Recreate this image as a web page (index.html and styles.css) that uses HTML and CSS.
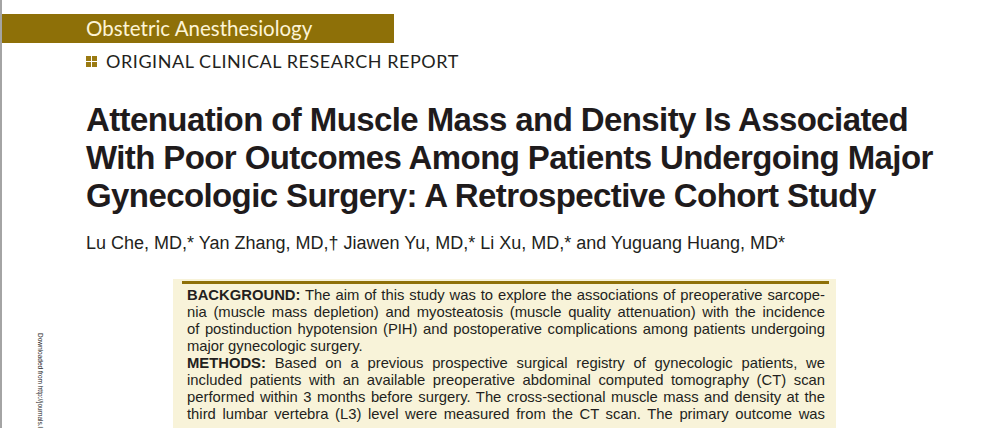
FILE: index.html
```html
<!DOCTYPE html>
<html lang="en">
<head>
<meta charset="utf-8">
<title>Attenuation of Muscle Mass and Density</title>
<link rel="stylesheet" href="styles.css">
</head>
<body>
<div class="page">
  <div class="side-note">Downloaded from http://journals.lww.com/anesthesia-analgesia by BhDMf5ePHKav1zEoum1tQfN4a+kJLhEZgbsIHo4XMi0hCywCX1AWnYQp/IlQrHD3</div>
  <div class="banner">Obstetric Anesthesiology</div>
  <div class="kicker">
    <span class="grid-icon"><i></i><i></i><i></i><i></i></span>
    <span>ORIGINAL CLINICAL RESEARCH REPORT</span>
  </div>
  <h1 class="title">Attenuation of Muscle Mass and Density Is Associated<br>With Poor Outcomes Among Patients Undergoing Major<br>Gynecologic Surgery: A Retrospective Cohort Study</h1>
  <p class="authors">Lu Che, MD,* Yan Zhang, MD,† Jiawen Yu, MD,* Li Xu, MD,* and Yuguang Huang, MD*</p>
  <div class="abstract">
    <div class="rule"></div>
    <div class="abstract-body">
      <span class="ln"><b>BACKGROUND:</b> The aim of this study was to explore the associations of preoperative sarcope-</span>
      <span class="ln">nia (muscle mass depletion) and myosteatosis (muscle quality attenuation) with the incidence</span>
      <span class="ln">of postinduction hypotension (PIH) and postoperative complications among patients undergoing</span>
      <span class="ln last">major gynecologic surgery.</span>
      <span class="ln"><b>METHODS:</b> Based on a previous prospective surgical registry of gynecologic patients, we</span>
      <span class="ln">included patients with an available preoperative abdominal computed tomography (CT) scan</span>
      <span class="ln">performed within 3 months before surgery. The cross-sectional muscle mass and density at the</span>
      <span class="ln">third lumbar vertebra (L3) level were measured from the CT scan. The primary outcome was</span>
    </div>
  </div>
</div>
</body>
</html>
```

FILE: styles.css
```css
html, body {
  margin: 0;
  padding: 0;
  background: #ffffff;
  overflow: hidden;
}

body {
  width: 1006px;
  height: 428px;
}

.page {
  position: relative;
  height: 428px;
  border-left: 2px solid #a4a4a4;
  padding-top: 14px;
  box-sizing: border-box;
  color: #231f20;
}

.side-note {
  position: absolute;
  left: 35px;
  top: 333px;
  writing-mode: vertical-rl;
  font-family: "Liberation Sans", Arial, sans-serif;
  font-size: 6.5px;
  line-height: 7px;
  color: #222;
  white-space: nowrap;
}

.banner {
  width: 392px;
  height: 29px;
  box-sizing: border-box;
  background: #8e7008;
  color: #fdf4d6;
  font-family: Lato, "Liberation Sans", sans-serif;
  font-size: 20.5px;
  line-height: 29px;
  padding-left: 84px;
}

.kicker {
  display: flex;
  align-items: center;
  gap: 9px;
  margin-top: 8px;
  padding-left: 84px;
  height: 20px;
  font-family: Lato, "Liberation Sans", sans-serif;
  font-weight: 400;
  font-size: 18px;
  letter-spacing: 0.55px;
  color: #231f20;
}

.grid-icon {
  display: grid;
  grid-template-columns: 5px 5px;
  grid-template-rows: 5px 5px;
  gap: 1px;
}

.grid-icon i {
  display: block;
  background: #9a7a12;
}

.title {
  margin: 30px 0 0;
  padding-left: 84px;
  font-family: "Liberation Sans", Arial, sans-serif;
  font-weight: bold;
  font-size: 33px;
  letter-spacing: -0.6px;
  line-height: 38px;
  color: #1f1b1c;
}

.authors {
  margin: 18px 0 0;
  padding-left: 84px;
  font-family: "Liberation Sans", Arial, sans-serif;
  font-size: 18px;
  line-height: 20px;
  color: #231f20;
}

.abstract {
  margin: 26px 0 0 171px;
  width: 663px;
  height: 160px;
  box-sizing: border-box;
  padding: 2px 7px 0 9px;
  background: #f8f3d9;
}

.rule {
  height: 3px;
  background: #8e7008;
}

.abstract-body {
  margin-top: 3px;
  padding: 0 4px 0 5px;
  font-family: "Liberation Sans", Arial, sans-serif;
  font-size: 14.8px;
  line-height: 17px;
  color: #231f20;
}

.ln {
  display: block;
  white-space: nowrap;
  text-align: justify;
  text-align-last: justify;
}

.ln.last {
  text-align-last: left;
}

.ln b {
  font-weight: bold;
}
```
